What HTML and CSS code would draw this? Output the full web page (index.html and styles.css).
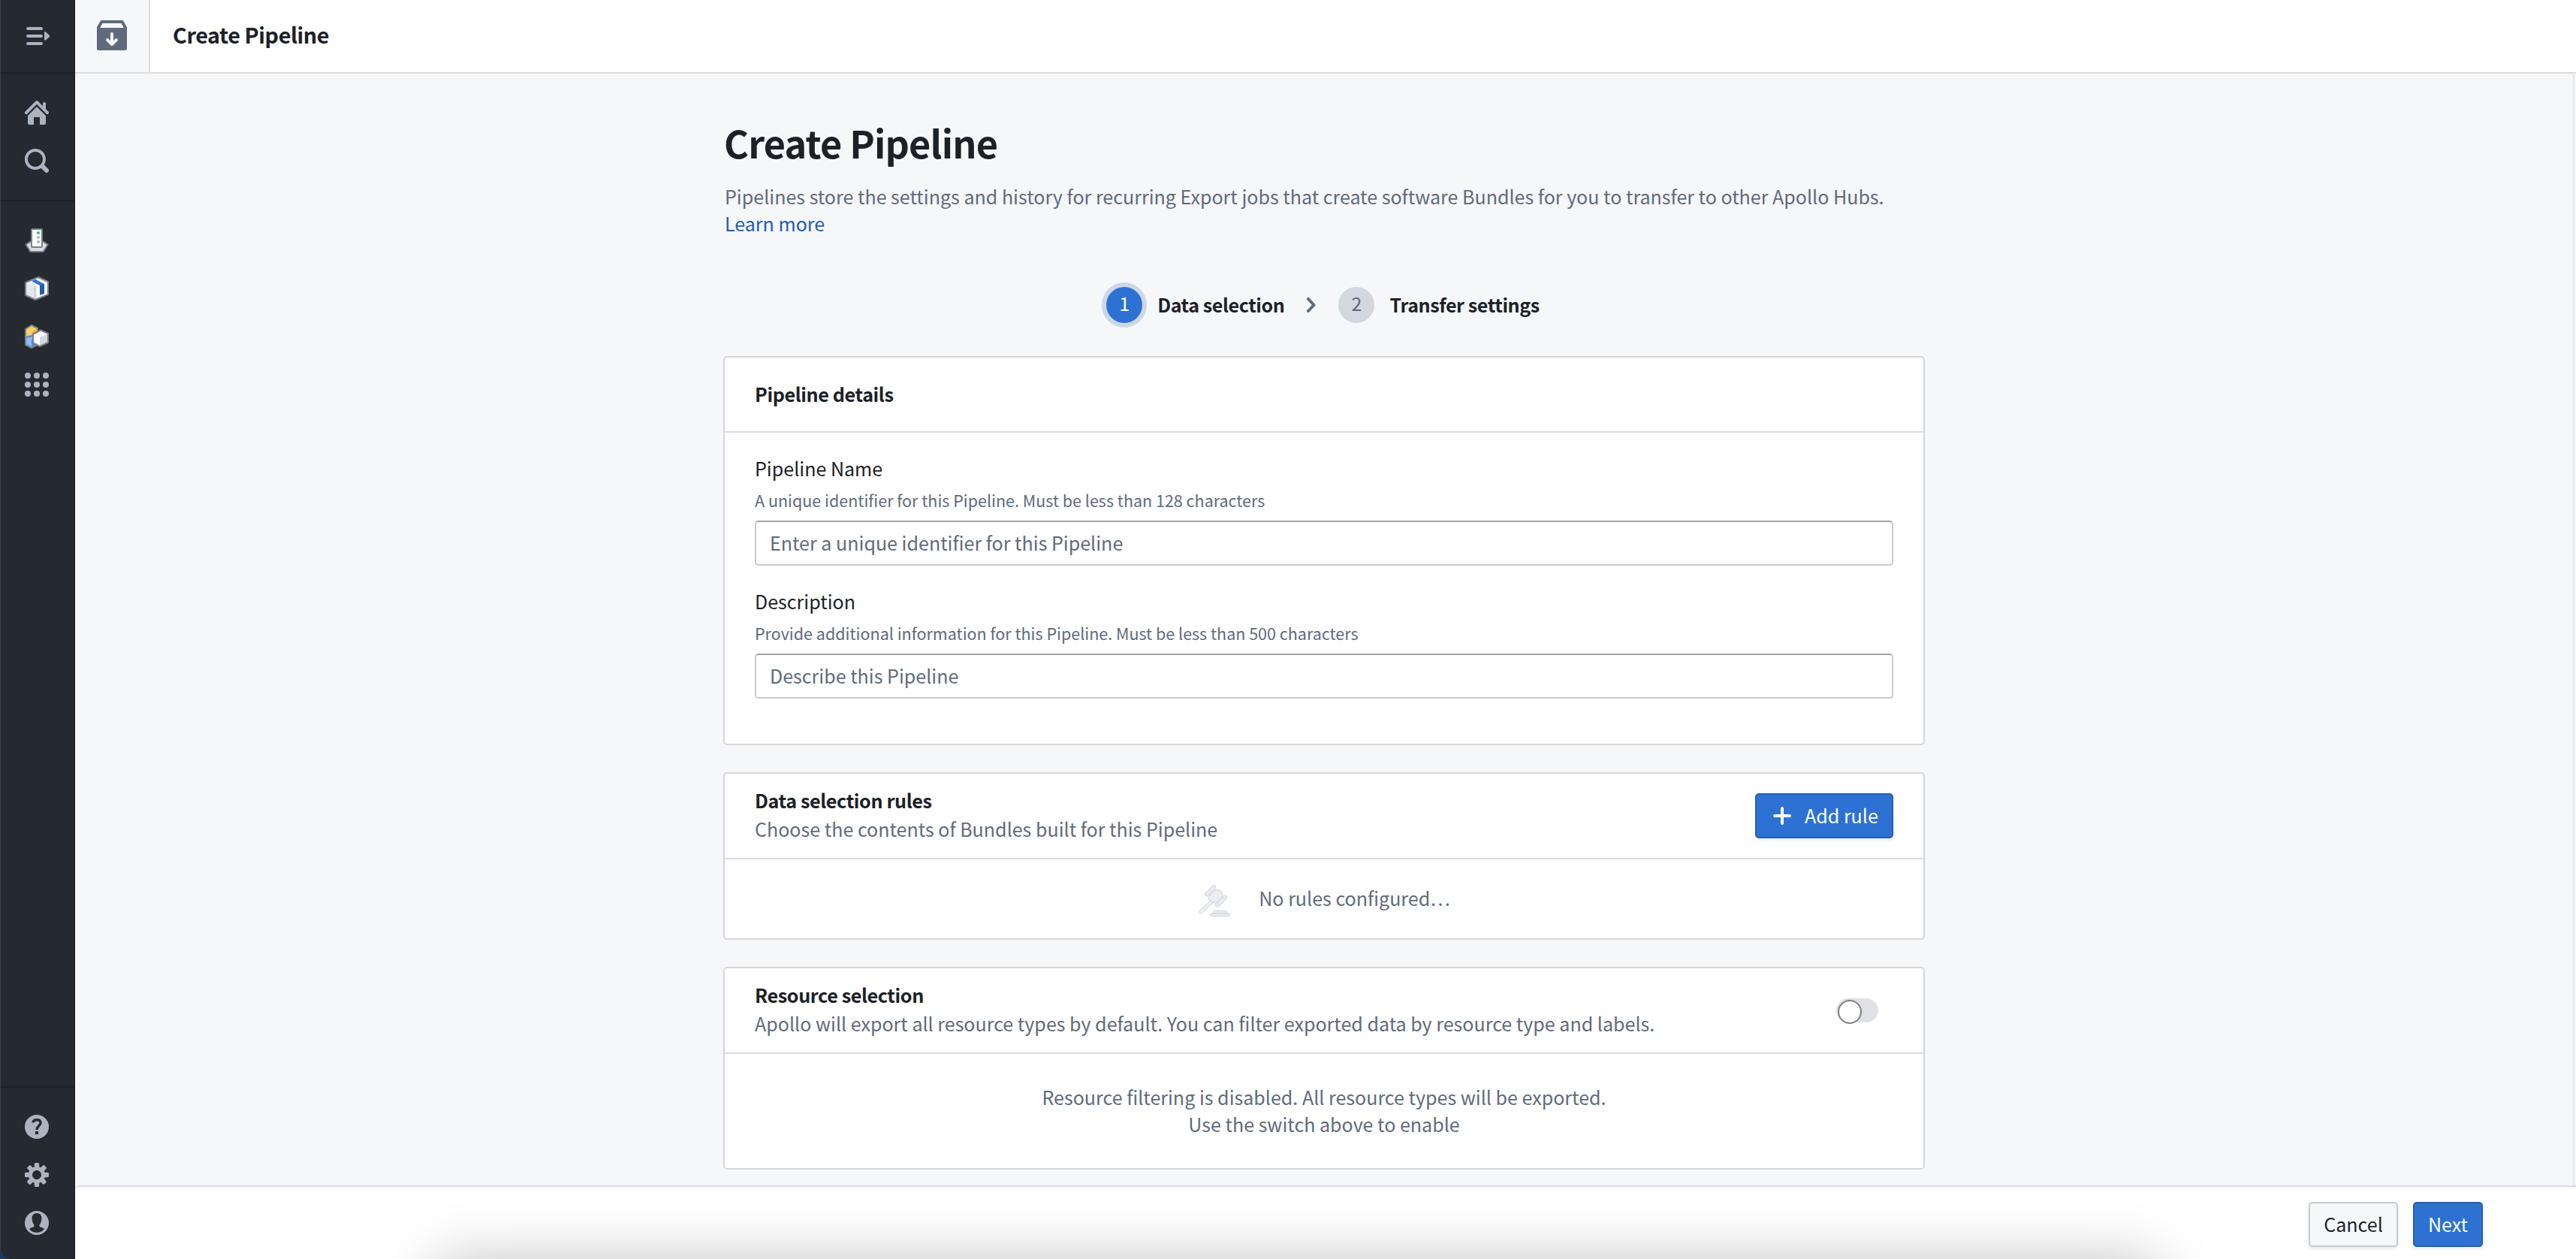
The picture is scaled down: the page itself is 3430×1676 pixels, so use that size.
FILE: index.html
```html
<!DOCTYPE html>
<html lang="en">
<head>
    <meta charset="UTF-8">
    <meta name="viewport" content="width=device-width, initial-scale=1.0">
    <title>Create Pipeline</title>
    <link rel="stylesheet" href="styles.css">
</head>
<body>

<div class="app">
    <!-- Sidebar -->
    <nav class="sidebar">
        <div class="nav-group nav-toggle">
            <svg class="icon" viewBox="0 0 16 16"><path d="M1.5 2h9a1 1 0 010 2h-9a1 1 0 010-2zM1.5 7h9a1 1 0 010 2h-9a1 1 0 010-2zM1.5 12h9a1 1 0 010 2h-9a1 1 0 010-2zM12.500 5.600c0-.5.500-.7.900-.4l2.400 2.200c.4.300.4.900 0 1.200l-2.400 2.200c-.4.300-.9.100-.9-.4z"/></svg>
        </div>
        <div class="nav-group nav-main">
            <svg class="icon" viewBox="0 0 16 16"><path d="M2 10v5c0 .55.45 1 1 1h3v-5h4v5h3c.55 0 1-.45 1-1v-5L8 4l-6 6zm13.710-2.710L14 5.590V2c0-.55-.45-1-1-1s-1 .45-1 1v1.590L8.710.290C8.530.110 8.280 0 8 0s-.53.110-.71.290l-7 7a1.003 1.003 0 001.420 1.420L8 2.410l6.290 6.290c.18.190.43.300.71.300a1.003 1.003 0 00.710-1.710z"/></svg>
            <svg class="icon" viewBox="0 0 16 16"><path fill-rule="evenodd" d="M15.550 13.430l-2.670-2.680a6.940 6.940 0 001.110-3.760c0-3.870-3.130-7-7-7s-7 3.130-7 7 3.130 7 7 7c1.390 0 2.680-.42 3.760-1.110l2.680 2.670a1.498 1.498 0 102.120-2.120zm-8.560-1.440c-2.760 0-5-2.240-5-5s2.240-5 5-5 5 2.240 5 5-2.240 5-5 5z"/></svg>
        </div>
        <div class="nav-group nav-apps">
            <!-- Server -->
            <svg class="icon" viewBox="0 0 32 32">
                <path d="M1.500 21.500L8 17.500h16l6.500 4L24.500 31h-17z" fill="#dce0e5" stroke="#7a8087" stroke-width="2"/>
                <rect x="9" y="1" width="14" height="24" rx="1" fill="#fff" stroke="#7a8087" stroke-width="2"/>
                <circle cx="18" cy="6" r="2.100" fill="#32bf7c"/>
                <circle cx="18" cy="12" r="2.100" fill="#abb3bf"/>
                <circle cx="18" cy="18" r="2.100" fill="#abb3bf"/>
            </svg>
            <!-- Package -->
            <svg class="icon" viewBox="0 0 32 32">
                <path d="M1 8L18 1l13 6v17L14 31 1 25z" fill="#edeff2"/>
                <path d="M14 13l17-6v17l-17 7z" fill="#fff"/>
                <path d="M1 8l13 5v18L1 25z" fill="#e5e8eb"/>
                <path d="M12 12.500l3.500.5V31L12 30z" fill="#d3d8de"/>
                <path d="M9 6l5-2 12 6v13l-6 1.500V12z" fill="#2d72d2"/>
                <path d="M20 12l6-2v13l-6 1.500z" fill="#215db0"/>
                <path d="M1 8L18 1l13 6v17L14 31 1 25z" fill="none" stroke="#7a8087" stroke-width="2" stroke-linejoin="round"/>
            </svg>
            <!-- Cubes -->
            <svg class="icon" viewBox="0 0 32 32">
                <path d="M1 6l8-5 8 4v9L1 17z" fill="#fbd065"/>
                <path d="M9 10l8-4v8H9z" fill="#f0b030"/>
                <path d="M1 16l8-3 8 3v11l-8 4-8-4z" fill="#8abbff"/>
                <path d="M9 20l8-3v10l-8 4z" fill="#4c90f0"/>
                <path d="M1 6l8-5 8 4v9L1 17zM1 16v11l8 4 8-4" fill="none" stroke="#7a8087" stroke-width="2" stroke-linejoin="round"/>
                <path d="M11 13l10-5.500L31 12v12l-11 5-9-4.500z" fill="#fff"/>
                <path d="M20 17l11-5v12l-11 5z" fill="#d3d8de"/>
                <path d="M11 13l10-5.500L31 12v12l-11 5-9-4.500z" fill="none" stroke="#7a8087" stroke-width="2" stroke-linejoin="round"/>
            </svg>
            <svg class="icon" viewBox="0 0 16 16">
                <circle cx="2" cy="2" r="2"/><circle cx="8" cy="2" r="2"/><circle cx="14" cy="2" r="2"/>
                <circle cx="2" cy="8" r="2"/><circle cx="8" cy="8" r="2"/><circle cx="14" cy="8" r="2"/>
                <circle cx="2" cy="14" r="2"/><circle cx="8" cy="14" r="2"/><circle cx="14" cy="14" r="2"/>
            </svg>
        </div>
        <div class="nav-group nav-bottom">
            <svg class="icon" viewBox="0 0 16 16">
                <circle cx="8" cy="8" r="8"/>
                <path d="M5.400 5.200C5.700 3.900 6.700 3.400 8 3.400c1.600 0 2.500.8 2.500 2 0 2-2.500 2.100-2.500 4.600" fill="none" stroke="#252a31" stroke-width="1.700"/>
                <path d="M7 11h2v2H7z" fill="#252a31"/>
            </svg>
            <svg class="icon" viewBox="0 0 16 16"><path fill-rule="evenodd" d="M15.190 6.390h-1.850c-.11-.37-.27-.71-.45-1.040l1.360-1.360c.31-.31.310-.82 0-1.130l-1.130-1.130a.803.803 0 00-1.130 0l-1.360 1.360c-.33-.17-.67-.33-1.040-.44V.790c0-.44-.36-.8-.8-.8h-1.600c-.44 0-.8.360-.8.800v1.860c-.39.120-.75.280-1.100.470l-1.300-1.300c-.3-.3-.79-.3-1.090 0L1.820 2.910c-.3.300-.3.790 0 1.090l1.300 1.300c-.2.340-.36.700-.48 1.090H.790c-.44 0-.8.360-.8.800v1.600c0 .44.360.8.800.8h1.850c.11.370.27.710.45 1.040l-1.360 1.360c-.31.310-.31.820 0 1.130l1.130 1.130c.31.310.82.310 1.130 0l1.360-1.360c.33.180.67.330 1.040.44v1.860c0 .44.360.8.800.8h1.600c.44 0 .8-.36.800-.8v-1.860c.39-.12.750-.28 1.100-.47l1.300 1.300c.3.300.79.300 1.090 0l1.090-1.090c.3-.3.300-.79 0-1.090l-1.300-1.300c.19-.35.360-.71.480-1.100h1.850c.44 0 .8-.36.800-.8v-1.600a.816.816 0 00-.81-.79zM8 11c-1.660 0-3-1.340-3-3s1.340-3 3-3 3 1.340 3 3-1.340 3-3 3z"/></svg>
            <svg class="icon" viewBox="0 0 16 16">
                <circle cx="8" cy="8" r="8"/>
                <path d="M8 1.500c2.100 0 3.300 1.500 3.200 3.400 0 1.800-.5 3.200-1.300 4.100-.4.900-.1 1.500.5 1.700 1 .3 2 .6 2.600 1.300-1.100 1.500-2.900 2.400-5 2.400s-3.900-.9-5-2.400c.6-.7 1.600-1 2.600-1.300.600-.2.900-.8.500-1.700-.8-.9-1.300-2.300-1.300-4.100C4.700 3 5.900 1.500 8 1.500z" fill="#252a31"/>
            </svg>
        </div>
    </nav>

    <div class="content">
        <!-- Top bar -->
        <header class="topbar">
            <div class="topbar-icon">
                <svg viewBox="0 0 20 20" width="40" height="40"><path fill-rule="evenodd" d="M3.200 0h13.600c.4 0 .7.200.9.500L20 4.600V19c0 .55-.45 1-1 1H1c-.55 0-1-.45-1-1V4.600L2.300.5c.2-.3.500-.5.900-.5zM3.800 2L2.100 5h15.800l-1.700-3zM10 8c-.55 0-1 .45-1 1v4.600l-1.300-1.300a1 1 0 00-1.400 1.400l3 3c.4.400 1 .4 1.400 0l3-3a1 1 0 00-1.400-1.400L11 13.600V9c0-.55-.45-1-1-1z"/></svg>
            </div>
            <div class="topbar-title">Create Pipeline</div>
        </header>

        <main class="page">
            <h1>Create Pipeline</h1>
            <p class="intro">Pipelines store the settings and history for recurring Export jobs that create software Bundles for you to transfer to other Apollo Hubs.<br><a href="#">Learn more</a></p>

            <div class="steps">
                <span class="step-number active">1</span>
                <span class="step-label">Data selection</span>
                <svg class="chevron" viewBox="0 0 12 20"><path d="M2 2l7.500 8L2 18"/></svg>
                <span class="step-number">2</span>
                <span class="step-label">Transfer settings</span>
            </div>

            <section class="card details">
                <div class="card-header">
                    <h2>Pipeline details</h2>
                </div>
                <div class="card-body">
                    <div class="field">
                        <label for="name">Pipeline Name</label>
                        <div class="helper">A unique identifier for this Pipeline. Must be less than 128 characters</div>
                        <input type="text" id="name" placeholder="Enter a unique identifier for this Pipeline">
                    </div>
                    <div class="field">
                        <label for="description">Description</label>
                        <div class="helper">Provide additional information for this Pipeline. Must be less than 500 characters</div>
                        <input type="text" id="description" placeholder="Describe this Pipeline">
                    </div>
                </div>
            </section>

            <section class="card rules">
                <div class="card-header">
                    <div class="heading">
                        <h2>Data selection rules</h2>
                        <p>Choose the contents of Bundles built for this Pipeline</p>
                    </div>
                    <button class="button primary add-rule">
                        <svg viewBox="0 0 24 24" width="24" height="24"><path d="M12 2v20M2 12h20"/></svg>
                        Add rule
                    </button>
                </div>
                <div class="card-body">
                    <svg class="gavel" viewBox="0 0 44 44">
                        <path d="M18.500 19.500l3 3L5.500 37.500c-2.500 1.500-5-1-3.500-3.500z"/>
                        <path d="M24 6l6 1.500 3.500 5-2 4.500-8 7.500-5.500-2.500-4-4 2-5z"/>
                        <rect x="-9" y="-2.500" width="18" height="5" rx="2.500" transform="translate(16.800 7.800) rotate(-46)"/>
                        <rect x="-9.500" y="-2.500" width="19" height="5" rx="2.500" transform="translate(31 21.600) rotate(-45)"/>
                        <path d="M21 34.500h17l2 3.500h-21zM18 38h23.500c1.500 0 1.500 3.500 0 3.500H17.500c-1.800 0-1.800-3.500.5-3.500z"/>
                    </svg>
                    <span>No rules configured…</span>
                </div>
            </section>

            <section class="card resources">
                <div class="card-header">
                    <div class="heading">
                        <h2>Resource selection</h2>
                        <p>Apollo will export all resource types by default. You can filter exported data by resource type and labels.</p>
                    </div>
                    <span class="switch"></span>
                </div>
                <div class="card-body">
                    <p>Resource filtering is disabled. All resource types will be exported.<br>Use the switch above to enable</p>
                </div>
            </section>
        </main>

        <!-- Footer -->
        <footer class="footer">
            <button class="button cancel">Cancel</button>
            <button class="button primary next">Next</button>
        </footer>
    </div>
</div>

</body>
</html>
```
FILE: styles.css
```css
/* Basic reset */
* {
    box-sizing: border-box;
}

body, html {
    margin: 0;
    padding: 0;
    height: 100%;
    overflow: hidden;
}

body {
    font-family: "Noto Sans CJK SC", "Noto Sans", sans-serif;
    font-size: 25.05px;
    line-height: 36px;
    color: #1c2127;
    background-color: #17386b;
}

h1, h2, p {
    margin: 0;
}

h1, h2, .topbar-title, .step-label {
    font-weight: bold;
    letter-spacing: -0.016em;
}

.app {
    display: flex;
    height: 100%;
}

/* Sidebar */
.sidebar {
    display: flex;
    flex-direction: column;
    width: 100px;
    background-color: #252a31;
    border-left: 1px solid #3b4047;
    border-right: 2px solid #1a1e24;
    border-bottom-left-radius: 14px;
}

.nav-group {
    display: flex;
    flex-direction: column;
    gap: 32px;
    padding-left: 32px;
    border-bottom: 2px solid #1c2127;
}

.icon {
    display: block;
    width: 32px;
    height: 32px;
    fill: #abb3bf;
}

.nav-toggle {
    height: 98px;
    padding: 32px 0 0 33px;
}

.nav-main {
    height: 170px;
    padding-top: 36px;
}

.nav-apps {
    flex: 1;
    padding-top: 36px;
}

.nav-bottom {
    height: 228px;
    padding-top: 36px;
    border-bottom: none;
}

/* Content area */
.content {
    flex: 1;
    display: flex;
    flex-direction: column;
    background-color: #f6f7f9;
}

.topbar {
    display: flex;
    flex-shrink: 0;
    height: 98px;
    background-color: #fff;
    border-bottom: 2px solid #d9dbde;
}

.topbar-icon {
    width: 100px;
    padding: 27px 0 0 29px;
    background-color: #f6f7f9;
    border-right: 2px solid #d9dbde;
    fill: #5f6b7c;
}

.topbar-title {
    padding-left: 30px;
    font-size: 28.8px;
    line-height: 91px;
}

.page {
    flex: 1;
    min-height: 0;
    padding: 60px 863px 0;
    margin-right: 2px;
    overflow: hidden;
    border-right: 2px solid #e5e6e8;
}

h1 {
    padding-left: 1px;
    font-size: 50.4px;
    line-height: 64px;
}

.intro {
    padding: 21px 0 0 2px;
    color: #5f6b7c;
}

a {
    color: #215db0;
    text-decoration: none;
}

/* Steps */
.steps {
    display: flex;
    align-items: center;
    justify-content: center;
    height: 60px;
    margin: 61px 0 38px;
    padding-right: 3px;
}

.step-number {
    width: 48px;
    height: 48px;
    line-height: 43px;
    border-radius: 50%;
    text-align: center;
    color: #5f6b7c;
    background-color: #d3d8de;
}

.step-number.active {
    color: #fff;
    background-color: #2d72d2;
    box-shadow: 0 0 0 6px #cdd7e6;
}

.step-label {
    margin-left: 20px;
    padding-bottom: 2px;
}

.chevron {
    width: 12px;
    height: 20px;
    margin: 0 30px;
    fill: none;
    stroke: #5f6b7c;
    stroke-width: 4;
    stroke-linecap: round;
    stroke-linejoin: round;
}

/* Cards */
.card {
    margin-bottom: 36px;
    background-color: #fff;
    border: 2px solid #d3d6da;
    border-radius: 5px;
}

.card-header {
    display: flex;
    align-items: center;
    justify-content: space-between;
    padding: 0 40px;
    border-bottom: 2px solid #dcdde0;
}

h2 {
    font-size: 25.2px;
    line-height: 38px;
}

.heading {
    margin-bottom: 4px;
}

.heading p {
    line-height: 38px;
    color: #5f6b7c;
}

.details {
    height: 518px;
}

.details .card-header {
    height: 100px;
    padding-bottom: 3px;
}

.details .card-body {
    padding: 29px 40px 0;
}

.field {
    height: 177px;
}

.field label {
    display: block;
}

.helper {
    margin: 7px 0 9px;
    font-size: 21.5px;
    color: #5f6b7c;
}

input {
    display: block;
    width: 100%;
    height: 60px;
    padding: 0 18px 2px;
    font: inherit;
    border: 2px solid #c9cacc;
    border-top-color: #a0a3a7;
    border-radius: 5px;
}

input::placeholder {
    color: #5f6b7c;
    opacity: 1;
}

.rules .card-header,
.resources .card-header {
    height: 114px;
}

.rules .card-body {
    display: flex;
    align-items: flex-start;
    justify-content: center;
    height: 105px;
    padding-top: 32px;
    color: #5f6b7c;
}

.gavel {
    width: 44px;
    height: 44px;
    margin: 2px 37px 0 0;
    fill: #ebedf0;
    stroke: #d0d5dc;
}

.rules .card-body span {
    line-height: 38px;
}

.resources .card-body {
    height: 152px;
    padding-top: 39px;
    text-align: center;
    color: #5f6b7c;
}

.switch {
    width: 56px;
    height: 32px;
    margin-right: 20px;
    padding: 2px;
    border-radius: 16px;
    background-color: #dfe1e5;
}

.switch::before {
    content: "";
    display: block;
    width: 28px;
    height: 28px;
    border: 2px solid #7f8082;
    border-radius: 50%;
    background-color: #fff;
}

/* Buttons */
.button {
    height: 60px;
    padding: 0 0 2px;
    font: inherit;
    color: #1c2127;
    background-color: #f6f7f9;
    border: 2px solid #c9cacc;
    border-radius: 5px;
    box-shadow: 0 2px 4px rgba(17, 20, 24, 0.1);
}

.button.primary {
    color: #fff;
    background-color: #2d72d2;
    border-color: #265fb0;
}

.cancel {
    width: 119px;
}

.next {
    width: 93px;
}

.add-rule {
    display: flex;
    align-items: center;
    gap: 18px;
    width: 184px;
    padding-left: 22px;
    white-space: nowrap;
}

.add-rule svg {
    flex-shrink: 0;
    margin-top: 2px;
    stroke: #fff;
    stroke-width: 4;
    stroke-linecap: round;
}

/* Footer with the soft shadow coming in from below the window */
.footer {
    position: relative;
    display: flex;
    flex-shrink: 0;
    justify-content: flex-end;
    gap: 20px;
    height: 98px;
    padding: 20px 124px 0 0;
    overflow: hidden;
    background-color: #fff;
    border-top: 2px solid #dcdde0;
    border-top-left-radius: 5px;
}

.footer::after {
    content: "";
    position: absolute;
    left: 480px;
    right: 556px;
    top: 100px;
    height: 200px;
    border-radius: 30px;
    box-shadow: 0 0 80px rgba(0, 0, 0, 0.26);
}
```
